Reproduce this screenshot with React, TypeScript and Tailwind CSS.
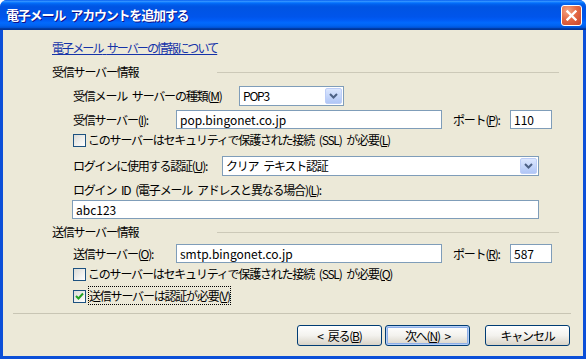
import React from "react";

const font = "font-['Noto_Sans_CJK_JP',sans-serif]";
const sp = "\u2002";

function Arrow() {
  return (
    <span className="mr-px flex h-[16px] w-[17px] items-center justify-center rounded-[2px] border border-[#bccdf7] bg-linear-to-b from-[#dce7fe] to-[#b0c6f6]">
      <svg width="9" height="6" viewBox="0 0 9 6">
        <path d="M1 1 L4.5 4.5 L8 1" stroke="#4d6185" strokeWidth="2" fill="none" />
      </svg>
    </span>
  );
}

function Combo({ value, className }: { value: string; className: string }) {
  return (
    <div className={`flex h-[20px] items-center border border-[#7f9db9] bg-white ${className}`}>
      <span className="flex-1 pl-[3px]">{value}</span>
      <Arrow />
    </div>
  );
}

function Field({ value, className }: { value: string; className: string }) {
  return (
    <div className={`flex h-[19px] items-center border border-[#7f9db9] bg-white pl-[3px] tracking-normal ${className}`}>
      {value}
    </div>
  );
}

function Check({ checked, children }: { checked?: boolean; children: React.ReactNode }) {
  return (
    <div className="flex h-[14px] items-center pl-[70px]">
      <span className="flex h-[13px] w-[13px] items-center justify-center border border-[#1c5180] bg-linear-to-br from-[#dcdcd7] to-white">
        {checked && (
          <svg width="9" height="8" viewBox="0 0 9 8">
            <path d="M1 4 L3.5 6.5 L8 1.5" stroke="#21a121" strokeWidth="2" fill="none" />
          </svg>
        )}
      </span>
      <span className="ml-[2px]">{children}</span>
    </div>
  );
}

function Section({ title }: { title: string }) {
  return (
    <div className="flex h-[14px] items-center pl-[49px] pr-[24px]">
      <span>{title}</span>
      <div className="ml-auto h-px w-[342px] bg-[#ccc9b8]" />
    </div>
  );
}

function Btn({ children, primary }: { children: React.ReactNode; primary?: boolean }) {
  return (
    <button
      className={`flex h-[21px] w-[85px] items-center justify-center rounded-[3px] border border-[#003c74] bg-linear-to-b from-white via-[#f3f2ee] to-[#d8d3c7] text-black ${
        primary ? "shadow-[inset_0_0_0_1px_#b6cff6,inset_0_0_0_2px_#8eafe8]" : ""
      }`}
    >
      {children}
    </button>
  );
}

export default function App() {
  return (
    <div className={`flex h-[359px] w-[586px] flex-col overflow-hidden rounded-t-[7px] bg-[#0b4fd8] text-[12px] leading-[14px] tracking-[-1.2px] text-black ${font}`}>
      <div className="flex h-[30px] shrink-0 items-center bg-[linear-gradient(180deg,#0058ee_0%,#3593ff_4%,#288eff_6%,#127dff_8%,#036ffc_10%,#0262ee_14%,#0057e5_20%,#0054e3_24%,#0055eb_56%,#005bf5_66%,#026afe_76%,#0062ef_86%,#0052d6_92%,#0040ab_94%,#003092_100%)] pl-[6px] pr-[4px]">
        <span className="text-[13px] font-bold tracking-[-1.2px] text-white [text-shadow:1px_1px_#0f1089]">
          電子メール{sp}アカウントを追加する
        </span>
        <span className="ml-auto flex h-[21px] w-[21px] items-center justify-center rounded-[3px] border border-white bg-[radial-gradient(circle_at_30%_25%,#f3a584_0%,#e46a45_45%,#c9432a_100%)]">
          <svg width="11" height="11" viewBox="0 0 11 11">
            <path d="M1.5 1.5 L9.5 9.5 M9.5 1.5 L1.5 9.5" stroke="white" strokeWidth="2.4" strokeLinecap="square" />
          </svg>
        </span>
      </div>

      <div className="mx-[3px] mb-[3px] flex flex-1 flex-col bg-[#ece9d8]">
        <div className="mt-[11px] pl-[49px]">
          <span className="tracking-[-1.9px] text-[#1533a8] underline">電子メール{sp}サーバーの情報について</span>
        </div>

        <div className="mt-[10px]">
          <Section title="受信サーバー情報" />
        </div>

        <div className="mt-[7px] flex items-center pl-[70px]">
          <span className="w-[166px]">
            受信メール{sp}サーバーの種類(<u>M</u>)
          </span>
          <Combo value="POP3" className="w-[105px]" />
        </div>

        <div className="mt-[4px] flex items-center pl-[70px]">
          <span className="w-[103px]">
            受信サーバー(<u>I</u>):
          </span>
          <Field value="pop.bingonet.co.jp" className="w-[266px]" />
          <span className="ml-[11px] w-[57px]">
            ポート(<u>P</u>):
          </span>
          <Field value="110" className="w-[42px]" />
        </div>

        <div className="mt-[4px]">
          <Check>
            このサーバーはセキュリティで保護された接続{sp}(SSL){sp}が必要(<u>L</u>)
          </Check>
        </div>

        <div className="mt-[9px] flex items-center pl-[70px]">
          <span className="w-[149px]">
            ログインに使用する認証(<u>U</u>):
          </span>
          <Combo value={`クリア${sp}テキスト認証`} className="w-[317px]" />
        </div>

        <div className="mt-[7px] pl-[70px]">
          ログイン{sp}ID{sp}(電子メール{sp}アドレスと異なる場合)(<u>L</u>):
        </div>

        <div className="mt-[3px] pl-[69px]">
          <Field value="abc123" className="w-[467px]" />
        </div>

        <div className="mt-[6px]">
          <Section title="送信サーバー情報" />
        </div>

        <div className="mt-[5px] flex items-center pl-[70px]">
          <span className="w-[103px]">
            送信サーバー(<u>O</u>):
          </span>
          <Field value="smtp.bingonet.co.jp" className="w-[266px]" />
          <span className="ml-[11px] w-[57px]">
            ポート(<u>R</u>):
          </span>
          <Field value="587" className="w-[42px]" />
        </div>

        <div className="mt-[4px]">
          <Check>
            このサーバーはセキュリティで保護された接続{sp}(SSL){sp}が必要(<u>Q</u>)
          </Check>
        </div>

        <div className="mt-[8px]">
          <Check checked>
            <span className="border border-dotted border-black leading-[12px]">
              送信サーバーは認証が必要(<u>V</u>)
            </span>
          </Check>
        </div>

        <div className="ml-[10px] mt-[10px] h-px w-[558px] bg-[#c8c5b4]" />

        <div className="mt-[11px] flex justify-end pr-[13px]">
          <Btn>
            {"<"}
            {sp}戻る(<u>B</u>)
          </Btn>
          <div className="ml-[3px]">
            <Btn primary>
              次へ(<u>N</u>){sp}
              {">"}
            </Btn>
          </div>
          <div className="ml-[15px]">
            <Btn>キャンセル</Btn>
          </div>
        </div>
      </div>
    </div>
  );
}
